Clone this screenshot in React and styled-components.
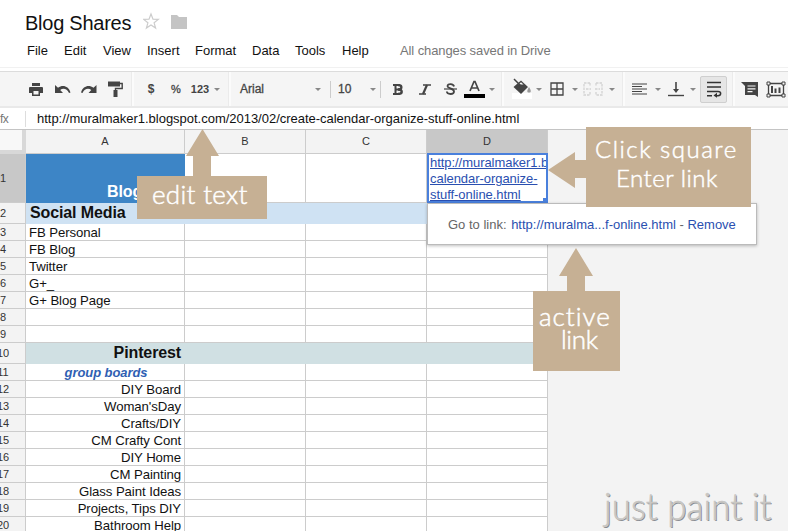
import { useState } from "react";
import styled, { createGlobalStyle } from "styled-components";

const GlobalStyle = createGlobalStyle`
  * { box-sizing: border-box; }
  body { margin: 0; background: #fff; font-family: "Liberation Sans", Arial, sans-serif; }
`

const Page = styled.div`
  position: relative;
  width: 788px;
  height: 531px;
  overflow: hidden;
  background: #fff;
  color: #111;
`

//header
const Header = styled.header`
  height: 68px;
  padding: 11px 0 0 25px;
  border-bottom: 1px solid #f1f1f1;
`

const TitleRow = styled.div`
  display: flex;
  height: 24px;
`

const Title = styled.h1`
  width: 118px;
  margin: 0;
  font-size: 20px;
  font-weight: 400;
  line-height: 24px;
  letter-spacing: -0.25px;
  white-space: nowrap;
`

const MenuBar = styled.nav`
  display: flex;
  padding-left: 2px;
  margin-top: 7px;
  font-size: 13px;
  line-height: 17px;
`

const MenuItem = styled.span`
  width: ${props => props.$w}px;
  white-space: nowrap;
`

const SaveState = styled(MenuItem)`
  color: #777;
  letter-spacing: -0.1px;
`

//toolbar
const Toolbar = styled.div`
  display: flex;
  align-items: center;
  height: 37px;
  margin-top: 3px;
  padding-left: 23px;
  background: #f5f5f5;
  border-top: 1px solid #dcdcdc;
  border-bottom: 2px solid #e9e9e9;
`

const Tool = styled.span`
  display: flex;
  flex: none;
  align-items: center;
  justify-content: ${props => props.$left ? 'flex-start' : 'center'};
  width: ${props => props.$w}px;
  height: 27px;
  color: #444;
  font-size: ${props => props.$size || 12}px;
  font-weight: ${props => props.$bold ? 700 : 400};
  -webkit-text-stroke: ${props => props.$heavy ? '0.3px #444' : '0'};
`

const Pressed = styled(Tool)`
  background: #e6e6e6;
  border: 1px solid #cfcfcf;
  border-radius: 2px;
`

const Caret = styled.i`
  flex: none;
  margin: 1px ${props => props.$r}px 0 ${props => props.$l}px;
  border: 3px solid transparent;
  border-top-color: #888;
  border-bottom: 0;
`

const Group = styled.i`
  flex: none;
  width: 3px;
  height: 34px;
  margin-right: ${props => props.$r}px;
  background: #fbfbfb;
  border-left: 1px solid #ebebeb;
`

const Line = styled.i`
  flex: none;
  width: 1px;
  height: 17px;
  margin-right: ${props => props.$r}px;
  background: #ccc;
`

//formula bar
const FormulaBar = styled.div`
  display: flex;
  align-items: center;
  height: 22px;
  border-bottom: 1px solid #c4c4c4;
  font-size: 13px;
`

const Fx = styled.span`
  width: 25px;
  color: #777;
  font-size: 12px;
  letter-spacing: -0.5px;
`

const FormulaText = styled.span`
  padding-left: 11px;
  border-left: 1px solid #ddd;
  line-height: 16px;
  letter-spacing: -0.02px;
  white-space: nowrap;
`

//sheet
const Sheet = styled.main`
  height: 401px;
  background: #f3f3f3;
  overflow: hidden;
`

const Row = styled.div`
  display: grid;
  grid-template-columns: 26px 159px 121px 121px 121px;
  width: 548px;
  height: ${props => props.$h}px;
`

const Corner = styled.div`
  background: #f8f8f8;
  border-right: 4px solid #d8d8d8;
  border-bottom: 4px solid #d8d8d8;
`

const HeadCell = styled.div`
  display: flex;
  align-items: center;
  justify-content: center;
  background: ${props => props.$on ? '#c8c8c8' : '#f3f3f3'};
  border-right: 1px solid #ccc;
  border-bottom: 1px solid #ccc;
  color: #333;
  font-size: 11px;
`

const ColHead = styled(HeadCell)`
  padding-bottom: 2px;
`

const RowHead = styled(HeadCell)`
  width: 46px;
  margin-left: -20px;
  padding-left: 1px;
`

const Cell = styled.div`
  display: flex;
  align-items: ${props => props.$tall ? 'flex-end' : 'center'};
  justify-content: ${props => props.$align || 'flex-start'};
  min-width: 0;
  padding: 1px 3px 0;
  overflow: hidden;
  background: ${props => props.$bg || '#fff'};
  border-right: 1px solid ${props => props.$bg || '#ccc'};
  border-bottom: 1px solid ${props => props.$bg || '#ccc'};
  font-size: 13.2px;
  line-height: 16px;
  letter-spacing: -0.08px;
  white-space: nowrap;
`

const Big = styled.b`
  padding: 0 0 1px 1px;
  font-size: 16px;
  letter-spacing: -0.12px;
`

const BlogTitle = styled(Big)`
  padding: 0 0 2px;
  width: 74px;
  color: #fff;
`

const GroupName = styled.b`
  padding-left: 2px;
  color: #2f5fb3;
  font-style: italic;
  font-size: 13px;
`

const LinkCell = styled.div`
  position: relative;
  height: 50px;
  margin-top: -1px;
  padding: 0 0 0 1px;
  background: #fff;
  border: 2px solid #4a80dc;
  color: #2a4fb0;
  font-size: 13px;
  line-height: 16px;
  text-decoration: underline;
  letter-spacing: -0.05px;
  white-space: pre;
  overflow: hidden;
`

const Handle = styled.i`
  position: absolute;
  right: -2px;
  bottom: -2px;
  width: 6px;
  height: 6px;
  background: #4a80dc;
  border: 1px solid #fff;
  border-right: 0;
  border-bottom: 0;
`

//things that float above the sheet
const LinkBubble = styled.div`
  position: absolute;
  left: 427px;
  top: 203px;
  width: 330px;
  height: 42px;
  padding-left: 20px;
  background: #fff;
  border: 1px solid #bbb;
  box-shadow: 0 1px 3px rgba(0, 0, 0, 0.25);
  color: #666;
  font-size: 13px;
  line-height: 41px;
  white-space: nowrap;
  a { color: #2a4fb0; }
  a:first-child { margin-left: 1px; }
`

const Callout = styled.div`
  position: absolute;
  left: ${props => props.$x}px;
  top: ${props => props.$y}px;
  width: ${props => props.$w}px;
  height: ${props => props.$h}px;
  padding-top: ${props => props.$pt}px;
  background: #c6b094;
  color: #fff;
  font-family: Lato, "Open Sans", sans-serif;
  font-weight: 300;
  font-size: ${props => props.$size}px;
  font-variant-ligatures: none;
  line-height: ${props => props.$lh}px;
  white-space: nowrap;
  -webkit-text-stroke: 0.5px #fff;
`

const CalloutLine = styled.div`
  padding-left: ${props => props.$left}px;
  letter-spacing: ${props => props.$ls}px;
`

const Arrow = styled.svg`
  position: absolute;
  left: ${props => props.$x}px;
  top: ${props => props.$y}px;
  fill: #c6b094;
`

const Signature = styled.div`
  position: absolute;
  left: 604px;
  top: 481px;
  color: #cbc8c2;
  font-family: Lato, sans-serif;
  font-weight: 300;
  font-size: 38px;
  line-height: 48px;
  -webkit-text-stroke: 0.5px #c2c2c2;
  text-shadow: 1px 1px 0 #868a90;
  white-space: nowrap;
  transform: scaleX(0.92);
  transform-origin: 0 0;
`

const menus = [
  ['File', 37], ['Edit', 39], ['View', 44], ['Insert', 48], ['Format', 57],
  ['Data', 43], ['Tools', 47], ['Help', 58],
]

const rows = [
  { n: 3, a: 'FB Personal' },
  { n: 4, a: 'FB Blog' },
  { n: 5, a: 'Twitter' },
  { n: 6, a: 'G+_' },
  { n: 7, a: 'G+ Blog Page' },
  { n: 8 },
  { n: 9 },
  { n: 10, a: 'Pinterest', h: 21, bg: '#d0e0e3', align: 'flex-end' },
  { n: 11, a: 'group boards', align: 'center' },
  { n: 12, a: 'DIY Board', align: 'flex-end' },
  { n: 13, a: "Woman'sDay", align: 'flex-end' },
  { n: 14, a: 'Crafts/DIY', align: 'flex-end' },
  { n: 15, a: 'CM Crafty Cont', align: 'flex-end' },
  { n: 16, a: 'DIY Home', align: 'flex-end' },
  { n: 17, a: 'CM Painting', align: 'flex-end' },
  { n: 18, a: 'Glass Paint Ideas', align: 'flex-end' },
  { n: 19, a: 'Projects, Tips DIY', align: 'flex-end' },
  { n: 20, a: 'Bathroom Help', align: 'flex-end' },
]

function ToolbarIcons({ wrap, setWrap }) {
  return (
    <Toolbar>
      <Tool $w={26}>
        <svg width="14" height="13" fill="#444"><path d="M3 0h8v3H3zM1 4h12a1 1 0 0 1 1 1v5h-3v3H3v-3H0V5a1 1 0 0 1 1-1z" /><path fill="#f5f5f5" d="M4.500 8h5v3.500h-5z" /></svg>
      </Tool>
      <Tool $w={27}>
        <svg width="16" height="10"><path d="M0 1v8h8L5.200 6C8 3.800 12 4.500 14 9l1.500-.6C13.500 1.800 7.500.4 3 3.800z" fill="#444" /></svg>
      </Tool>
      <Tool $w={26}>
        <svg width="16" height="10"><path d="M15.500 1v8h-8l2.800-3C7.500 3.800 3.500 4.500 1.500 9L0 8.400C2 1.800 8 .4 12.500 3.800z" fill="#444" /></svg>
      </Tool>
      <Tool $w={26}>
        <svg width="15" height="17" fill="none" stroke="#444"><path d="M0 3h12" strokeWidth="5" /><path d="M12 2.500h2.200v5H7.500v2" strokeWidth="1.400" /><path d="M7.500 9v7" strokeWidth="4" /></svg>
      </Tool>
      <Tool $w={3} />
      <Group $r={4} />
      <Tool $w={26} $bold>$</Tool>
      <Tool $w={24} $heavy $size={11}>%</Tool>
      <Tool $w={24} $bold $size={11}>123</Tool>
      <Caret $l={2} $r={8} />
      <Group $r={9} />
      <Tool $w={75} $left $heavy>Arial</Tool>
      <Caret $l={0} $r={9} />
      <Line $r={7} />
      <Tool $w={32} $left $heavy>10</Tool>
      <Caret $l={0} $r={4} />
      <Line $r={4} />
      <Tool $w={26}>
        <svg width="10" height="11" fill="none" stroke="#444"><path d="M0 1h6M0 10h6M2.500 0v11M3 5.500h4" strokeWidth="2" /><path d="M5 1c4.500 0 4.500 4.200 0 4.500 5 0 5 4.500 0 4.500" strokeWidth="2.300" /></svg>
      </Tool>
      <Tool $w={27}>
        <svg width="12" height="11" fill="none" stroke="#444"><path d="M4 1h8M0 10h7" strokeWidth="1.600" /><path d="M8 1L4 10" strokeWidth="2.200" /></svg>
      </Tool>
      <Tool $w={24}>
        <svg width="13" height="12" fill="none" stroke="#444"><path d="M0 6h13" strokeWidth="1.200" /><path d="M10 3.500C9.500.4 3.500.2 3.500 3.200 3.500 5.500 10 5.500 10 8.500c0 3.300-6.800 3.300-7.200 0" strokeWidth="1.800" /></svg>
      </Tool>
      <Tool $w={25}>
        <svg width="21" height="18" fill="none" stroke="#444"><path d="M6 11L10 1.500h1L15 11M7.500 8h6" strokeWidth="1.700" /><path d="M0 16h21" stroke="#000" strokeWidth="4" /></svg>
      </Tool>
      <Caret $l={2} $r={6} />
      <Group $r={6} />
      <Tool $w={23}>
        <svg width="20" height="22"><path fill="#fff" d="M0 15h20v6H0z" /><path d="M9 2.500l7 6.500-7 7-7.500-7z" fill="#444" /><path d="M6.500 6.500L9 4.200l2.500 2.300z" fill="#f5f5f5" /><path d="M2 1l7 7" stroke="#444" strokeWidth="1.500" /><path d="M17 9c2.200 3.500 2.500 5.500 0 5.500s-2-2-0-5.500z" fill="#999" /></svg>
      </Tool>
      <Caret $l={3} $r={6} />
      <Tool $w={18}>
        <svg width="14" height="14" fill="none" stroke="#444" strokeWidth="1.300"><path d="M1 1h12v12H1zM7 1v12M1 7h12" /></svg>
      </Tool>
      <Caret $l={6} $r={4} />
      <Tool $w={22}>
        <svg width="20" height="14" fill="none" stroke="#d2d2d2" strokeWidth="1.300" strokeDasharray="2.500 1"><path d="M7 1H1v12h6M13 1h6v12h-6M7 1v3M13 1v3M7 10v3M13 10v3M3 7h5M12 7h5" /></svg>
      </Tool>
      <Caret $l={5} $r={7} />
      <Group $r={5} />
      <Tool $w={18}>
        <svg width="15" height="12" fill="none" stroke="#444" strokeWidth="1.200"><path d="M0 1h15M0 3.500h10M0 6h15M0 8.500h10M0 11h15" /></svg>
      </Tool>
      <Caret $l={7} $r={5} />
      <Tool $w={20}>
        <svg width="16" height="15"><path d="M0 13.500h16" stroke="#444" strokeWidth="1.400" /><path d="M8 0v9" stroke="#444" strokeWidth="1.600" /><path d="M5 7h6l-3 4z" fill="#444" /></svg>
      </Tool>
      <Caret $l={4} $r={4} />
      <Pressed $w={27} onClick={() => { setWrap(!wrap) }}>
        <svg width="16" height="17" fill="none" stroke="#333" strokeWidth="1.500"><path d="M1 1.500h14M1 6h14M1 10.500h11c3.500 0 3.500 4.200 0 4.200h-2M1 14.700h5" /><path d="M11 11.800v5L7.500 14.500z" fill="#333" stroke="none" /></svg>
      </Pressed>
      <Tool $w={5} />
      <Group $r={6} />
      <Tool $w={18}>
        <svg width="18" height="16"><path d="M0 1h17v15l-3-2H4V5z" fill="#444" /><path d="M6.500 5h8M6.500 7.800h8M6.500 10.600h5" stroke="#f5f5f5" strokeWidth="1.200" /></svg>
      </Tool>
      <Tool $w={7} />
      <Tool $w={20}>
        <svg width="20" height="17" fill="none" stroke="#444"><path d="M2.500 2.500h15v12h-15z" strokeWidth="1.300" /><path d="M6 5v7M9.500 7.500V12M13.500 6.500V12" strokeWidth="2" /><path d="M1 1h3v3H1zM16 1h3v3h-3zM1 13h3v3H1zM16 13h3v3h-3z" fill="#f5f5f5" /></svg>
      </Tool>
    </Toolbar>
  )
}

function ColumnA({ row }) {
  if (row.n == 10) {
    return <Big>{row.a}</Big>
  }
  if (row.n == 11) {
    return <GroupName>{row.a}</GroupName>
  }
  return <span>{row.a}</span>
}

function App() {

  let [wrap, setWrap] = useState(true);

  return (
    <Page>
      <GlobalStyle />
      <Header>
        <TitleRow>
          <Title>Blog Shares</Title>
          <svg width="50" height="22">
            <path d="M8 3l2 5.200 5.300.2-4.200 3.400 1.500 5.200L8 14l-4.600 3 1.500-5.200L.7 8.400l5.300-.2z" fill="#fff" stroke="#ccc" strokeWidth="1.200" />
            <path d="M28 4h6l2 2h8v12H28z" fill="#c4c4c4" />
          </svg>
        </TitleRow>
        <MenuBar>
          {menus.map((m) => <MenuItem key={m[0]} $w={m[1]}>{m[0]}</MenuItem>)}
          <SaveState $w={170}>All changes saved in Drive</SaveState>
        </MenuBar>
      </Header>

      <ToolbarIcons wrap={wrap} setWrap={setWrap} />

      <FormulaBar>
        <Fx>fx</Fx>
        <FormulaText>http://muralmaker1.blogspot.com/2013/02/create-calendar-organize-stuff-online.html</FormulaText>
      </FormulaBar>

      <Sheet>
        <Row $h={24}>
          <Corner />
          {['A', 'B', 'C', 'D'].map((c) => <ColHead key={c} $on={c == 'D'}>{c}</ColHead>)}
        </Row>
        <Row $h={49}>
          <RowHead $on>1</RowHead>
          <Cell $bg="#3d85c6" $tall $align="flex-end"><BlogTitle>Blog</BlogTitle></Cell>
          <Cell />
          <Cell />
          <LinkCell>{'http://muralmaker1.b\ncalendar-organize-\nstuff-online.html'}<Handle /></LinkCell>
        </Row>
        <Row $h={21}>
          <RowHead>2</RowHead>
          <Cell $bg="#cfe2f3"><Big>Social Media</Big></Cell>
          <Cell $bg="#cfe2f3" />
          <Cell $bg="#cfe2f3" />
          <Cell $bg="#cfe2f3" />
        </Row>
        {rows.map((row) => (
          <Row key={row.n} $h={row.h || 17}>
            <RowHead>{row.n}</RowHead>
            <Cell $bg={row.bg} $align={row.align}><ColumnA row={row} /></Cell>
            <Cell $bg={row.bg} />
            <Cell $bg={row.bg} />
            <Cell $bg={row.bg} />
          </Row>
        ))}
      </Sheet>

      <LinkBubble>Go to link: <a>http://muralma...f-online.html</a> - <a>Remove</a></LinkBubble>

      <Arrow $x={186} $y={129} width="33" height="48"><path d="M16.500 0L33 27h-8v21H7V27H0z" /></Arrow>
      <Callout $x={137} $y={176} $w={130} $h={43} $pt={1} $size={26} $lh={34}>
        <CalloutLine $left={15} $ls={0.3}>edit text</CalloutLine>
      </Callout>

      <Arrow $x={548} $y={152} width="39" height="36"><path d="M0 18L27 0v8h12v18H27v10z" /></Arrow>
      <Callout $x={586} $y={127} $w={165} $h={80} $pt={7} $size={24} $lh={29}>
        <CalloutLine $left={9} $ls={1.5}>Click square</CalloutLine>
        <CalloutLine $left={30} $ls={0.5}>Enter link</CalloutLine>
      </Callout>

      <Arrow $x={559} $y={248} width="34" height="44"><path d="M17 0L34 28h-8v16H8V28H0z" /></Arrow>
      <Callout $x={533} $y={291} $w={87} $h={80} $pt={14} $size={26} $lh={23}>
        <CalloutLine $left={6} $ls={1}>active</CalloutLine>
        <CalloutLine $left={28} $ls={-0.4}>link</CalloutLine>
      </Callout>

      <Signature>just paint it</Signature>
    </Page>
  )
}

export default App;
